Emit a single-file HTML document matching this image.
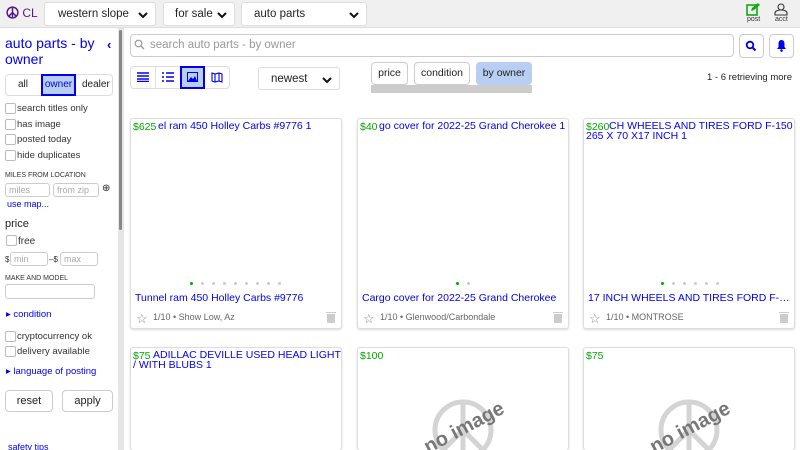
<!DOCTYPE html>
<html><head><meta charset="utf-8"><style>
*{box-sizing:border-box;margin:0;padding:0}
html,body{width:800px;height:450px;overflow:hidden}
body{font-family:"Liberation Sans",sans-serif;background:#fff;position:relative;color:#222;font-size:11px}
.a{position:absolute}
.top{left:0;top:0;width:800px;height:28px;background:#f0f0f0;border-bottom:1px solid #ddd}
.sel{position:absolute;top:2px;height:24px;background:#fff;border:1px solid #ddd;border-radius:3px;font-size:11.5px;line-height:22px;padding-left:13px;color:#222;white-space:nowrap}
.chev{position:absolute;right:6px;top:6px;width:12px;height:12px}
.side{left:0;top:28px;width:118px;height:422px;background:#fff}
.sb{left:118px;top:28px;width:6px;height:422px;background:#e6e6e6}
.sbt{left:119px;top:30px;width:3px;height:200px;background:#888;border-radius:2px}
.blue{color:#00e}
.cb{position:absolute;width:11px;height:11px;border:1px solid #bbb;border-radius:2px;background:#fff}
.lbl{position:absolute;font-size:9.5px;color:#333;white-space:nowrap}
.inp{position:absolute;height:14px;border:1px solid #ccc;border-radius:3px;font-size:9px;color:#aaa;padding-left:3px;line-height:12px}
.btn{position:absolute;border:1px solid #ccc;border-radius:4px;background:#fff;text-align:center;font-size:11px}
.card{position:absolute;width:212px;background:#fff;border:1px solid #ddd;border-radius:3px;box-shadow:0 1px 2px rgba(0,0,0,.15);overflow:hidden}
.pr{position:absolute;left:2px;top:2px;color:#0a0;font-size:10.5px}
.tt{position:absolute;top:2px;color:#00e;font-size:10.5px;white-space:nowrap;line-height:10px}
.ttl{position:absolute;left:4px;top:173px;color:#00e;font-size:10.5px;white-space:nowrap;width:204px;overflow:hidden;text-overflow:ellipsis}
.meta{position:absolute;left:22px;top:193px;color:#666;font-size:9px}
.dots{position:absolute;top:163px;height:4px}
.dots i{display:inline-block;width:3px;height:3px;border-radius:50%;background:#ccc;margin-right:8px;vertical-align:top}
.dots i.g{background:#0a0}
.trash{position:absolute;left:196px;top:195px;width:8px;height:9px;background:#ccc;border-radius:0 0 1px 1px}
.trash:before{content:"";position:absolute;left:-1px;top:-2px;width:10px;height:1px;background:#ccc}
</style></head><body>
<div class="a top"></div>
<div class="a" style="left:6px;top:6px;font-size:12px;color:#551a8b">
<svg width="13" height="13" viewBox="0 0 14 14" style="vertical-align:-2px"><circle cx="7" cy="7" r="5.8" fill="none" stroke="#551a8b" stroke-width="1.6"/><path d="M7 1.2V12.8M7 7L2.9 11.1M7 7L11.1 11.1" stroke="#551a8b" stroke-width="1.6"/></svg> CL</div>
<div class="sel" style="left:44px;width:112px">western slope<svg class="chev" viewBox="0 0 12 12"><path d="M2 4l4 4 4-4" fill="none" stroke="#111" stroke-width="2"/></svg></div>
<div class="sel" style="left:163px;width:72px;padding-left:11px">for sale<svg class="chev" viewBox="0 0 12 12"><path d="M2 4l4 4 4-4" fill="none" stroke="#111" stroke-width="2"/></svg></div>
<div class="sel" style="left:241px;width:126px;padding-left:12px">auto parts<svg class="chev" viewBox="0 0 12 12"><path d="M2 4l4 4 4-4" fill="none" stroke="#111" stroke-width="2"/></svg></div>
<svg class="a" style="left:746px;top:3px" width="14" height="13" viewBox="0 0 14 13"><rect x="1" y="2" width="10" height="10" fill="none" stroke="#1a1" stroke-width="1.6"/><path d="M5 8l1-3 6-5 2 2-6 5z" fill="#1a1"/></svg>
<div class="a" style="left:747px;top:16px;font-size:7px;color:#333">post</div>
<svg class="a" style="left:774px;top:3px" width="14" height="13" viewBox="0 0 14 13"><circle cx="7" cy="4" r="3" fill="none" stroke="#333" stroke-width="1.1"/><path d="M1 12v-2c0-2 3-3 6-3s6 1 6 3v2z" fill="none" stroke="#333" stroke-width="1.1"/></svg>
<div class="a" style="left:775px;top:16px;font-size:7px;color:#333">acct</div>

<div class="a side"></div>
<div class="a sb"></div><div class="a sbt"></div>
<div class="a blue" style="left:5px;top:35px;font-size:14px;line-height:16px;width:95px">auto parts - by owner</div>
<div class="a blue" style="left:107px;top:37px;font-size:13px;font-weight:bold">‹</div>
<div class="btn" style="left:5px;top:74px;width:108px;height:22px;border-color:#ddd"></div>
<div class="a" style="left:18px;top:79px;font-size:10px">all</div>
<div class="a" style="left:41px;top:74px;width:35px;height:22px;background:#b8cef2;border:2px solid #00e;font-size:10px;color:#00e;text-align:center;line-height:18px">owner</div>
<div class="a" style="left:82px;top:79px;font-size:10px">dealer</div>
<div class="cb" style="left:5px;top:103px"></div><div class="lbl" style="left:17px;top:103px">search titles only</div>
<div class="cb" style="left:5px;top:119px"></div><div class="lbl" style="left:17px;top:119px">has image</div>
<div class="cb" style="left:5px;top:134px"></div><div class="lbl" style="left:17px;top:134px">posted today</div>
<div class="cb" style="left:5px;top:150px"></div><div class="lbl" style="left:17px;top:150px">hide duplicates</div>
<div class="lbl" style="left:5px;top:172px;font-size:7px">MILES FROM LOCATION</div>
<div class="inp" style="left:5px;top:183px;width:45px">miles</div>
<div class="inp" style="left:53px;top:183px;width:46px">from zip</div>
<div class="a" style="left:102px;top:183px;font-size:10px">⊕</div>
<div class="a blue" style="left:7px;top:199px;font-size:9px">use map...</div>
<div class="a" style="left:5px;top:218px;font-size:11px">price</div>
<div class="cb" style="left:6px;top:235px"></div><div class="lbl" style="left:18px;top:236px;font-size:10px">free</div>
<div class="lbl" style="left:5px;top:255px;font-size:8px">$</div><div class="inp" style="left:10px;top:252px;width:38px;height:14px">min</div>
<div class="lbl" style="left:49px;top:255px;font-size:8px">–$</div><div class="inp" style="left:60px;top:252px;width:38px;height:14px">max</div>
<div class="lbl" style="left:5px;top:275px;font-size:7px">MAKE AND MODEL</div>
<div class="inp" style="left:5px;top:284px;width:90px;height:15px"></div>
<div class="a blue" style="left:6px;top:309px;font-size:9.5px">▸ condition</div>
<div class="cb" style="left:5px;top:331px"></div><div class="lbl" style="left:17px;top:331px">cryptocurrency ok</div>
<div class="cb" style="left:5px;top:346px"></div><div class="lbl" style="left:17px;top:346px">delivery available</div>
<div class="a blue" style="left:6px;top:366px;font-size:9.5px">▸ language of posting</div>
<div class="btn" style="left:5px;top:390px;width:48px;height:22px;line-height:20px">reset</div>
<div class="btn" style="left:62px;top:390px;width:51px;height:22px;line-height:20px">apply</div>
<div class="a blue" style="left:8px;top:443px;font-size:9px;line-height:9px">safety tips</div>

<div class="a" style="left:130px;top:34px;width:604px;height:23px;border:1px solid #ccc;border-radius:4px"></div>
<svg class="a" style="left:134px;top:39px" width="11" height="11" viewBox="0 0 11 11"><circle cx="4.5" cy="4.5" r="3.3" fill="none" stroke="#999" stroke-width="1.2"/><path d="M7 7l3 3" stroke="#999" stroke-width="1.3"/></svg>
<div class="a" style="left:150px;top:39px;font-size:11.5px;color:#999">search auto parts - by owner</div>
<div class="btn" style="left:739px;top:34px;width:25px;height:24px"></div>
<svg class="a" style="left:745px;top:40px" width="12" height="12" viewBox="0 0 12 12"><circle cx="5" cy="5" r="3.3" fill="none" stroke="#00e" stroke-width="1.8"/><path d="M7.5 7.5l3 3" stroke="#00e" stroke-width="2"/></svg>
<div class="btn" style="left:769px;top:34px;width:25px;height:24px"></div>
<svg class="a" style="left:776px;top:39px" width="11" height="13" viewBox="0 0 11 13"><path d="M5.5 1c2.3 0 3 2 3 4v3l1.5 2H1l1.5-2V5c0-2 .7-4 3-4z" fill="#00e"/><circle cx="5.5" cy="11.5" r="1.3" fill="#00e"/></svg>

<div class="btn" style="left:130px;top:66px;width:100px;height:23px;border-color:#ddd"></div>
<div class="a" style="left:155px;top:67px;width:1px;height:21px;background:#ddd"></div>
<svg class="a" style="left:137px;top:72px" width="12" height="10"><path d="M0 1h12M0 4h12M0 7h12M0 9.5h12" stroke="#00e" stroke-width="1.4"/></svg>
<svg class="a" style="left:162px;top:72px" width="12" height="10"><path d="M0 1h2M4 1h8M0 5h2M4 5h8M0 9h2M4 9h8" stroke="#00e" stroke-width="1.6"/></svg>
<div class="a" style="left:180px;top:66px;width:25px;height:23px;background:#b8cef2;border:2px solid #00e"></div>
<svg class="a" style="left:187px;top:72px" width="11" height="10"><rect x=".5" y=".5" width="10" height="9" fill="none" stroke="#00e"/><path d="M1 9l3-4 2 2 2-3 2 5z" fill="#00e"/></svg>
<svg class="a" style="left:211px;top:72px" width="12" height="11"><path d="M1 1l3 1 4-1 3 1v8l-3-1-4 1-3-1z M4 2v8 M8 1v8" fill="none" stroke="#00e" stroke-width="1.1"/></svg>

<div class="sel" style="left:258px;top:67px;width:82px;height:23px;padding-left:12px">newest<svg class="chev" viewBox="0 0 12 12"><path d="M2 4l4 4 4-4" fill="none" stroke="#111" stroke-width="2"/></svg></div>
<div class="a" style="left:371px;top:85px;width:161px;height:8px;background:#ccc"></div>
<div class="btn" style="left:371px;top:62px;width:37px;height:23px;line-height:21px;font-size:10.5px">price</div>
<div class="btn" style="left:414px;top:62px;width:56px;height:23px;line-height:21px;font-size:10.5px">condition</div>
<div class="a" style="left:476px;top:62px;width:56px;height:23px;background:#b8cef2;border-radius:4px;text-align:center;line-height:23px;font-size:10.5px">by owner</div>
<div class="a" style="left:707px;top:72px;font-size:9.5px;color:#222">1 - 6 retrieving more</div>

<div class="card" style="left:130px;top:118px;height:211px">
<div class="pr">$625</div><div class="tt" style="left:27px">el ram 450 Holley Carbs #9776 1</div>
<div class="dots" style="left:59px"><i class="g"></i><i></i><i></i><i></i><i></i><i></i><i></i><i></i><i></i></div>
<div class="ttl">Tunnel ram 450 Holley Carbs #9776</div>
<div class="a" style="left:5px;top:192px;color:#888;font-size:13px">☆</div>
<div class="meta">1/10 • Show Low, Az</div>
<div class="trash"></div>
</div>
<div class="card" style="left:357px;top:118px;height:211px">
<div class="pr">$40</div><div class="tt" style="left:21px">go cover for 2022-25 Grand Cherokee 1</div>
<div class="dots" style="left:98px"><i class="g"></i><i></i></div>
<div class="ttl">Cargo cover for 2022-25 Grand Cherokee</div>
<div class="a" style="left:5px;top:192px;color:#888;font-size:13px">☆</div>
<div class="meta">1/10 • Glenwood/Carbondale</div>
<div class="trash"></div>
</div>
<div class="card" style="left:583px;top:118px;height:211px">
<div class="pr">$260</div><div class="tt" style="left:25px">CH WHEELS AND TIRES FORD F-150</div><div class="tt" style="left:2px;top:12px">265 X 70 X17 INCH 1</div>
<div class="dots" style="left:77px"><i class="g"></i><i></i><i></i><i></i><i></i><i></i></div>
<div class="ttl">17 INCH WHEELS AND TIRES FORD F-150 265</div>
<div class="a" style="left:5px;top:192px;color:#888;font-size:13px">☆</div>
<div class="meta">1/10 • MONTROSE</div>
<div class="trash"></div>
</div>

<div class="card" style="left:130px;top:347px;height:103px;border-bottom:none">
<div class="pr">$75</div><div class="tt" style="left:22px">ADILLAC DEVILLE USED HEAD LIGHTS</div><div class="tt" style="left:2px;top:12px">/ WITH BLUBS 1</div>
</div>
<div class="card" style="left:357px;top:347px;height:103px;border-bottom:none"><div class="pr">$100</div>
<svg class="a" style="left:65px;top:45px" width="110" height="60"><circle cx="40" cy="37" r="28" fill="none" stroke="#d4d4d4" stroke-width="5"/><path d="M40 9v56M40 37L20 57M40 37l20 20" stroke="#d4d4d4" stroke-width="5"/><text x="44" y="40" transform="rotate(-28 44 40)" text-anchor="middle" font-family="Liberation Sans" font-size="20" font-weight="bold" fill="#777">no image</text></svg>
</div>
<div class="card" style="left:583px;top:347px;height:103px;border-bottom:none"><div class="pr">$75</div>
<svg class="a" style="left:65px;top:45px" width="110" height="60"><circle cx="40" cy="37" r="28" fill="none" stroke="#d4d4d4" stroke-width="5"/><path d="M40 9v56M40 37L20 57M40 37l20 20" stroke="#d4d4d4" stroke-width="5"/><text x="44" y="40" transform="rotate(-28 44 40)" text-anchor="middle" font-family="Liberation Sans" font-size="20" font-weight="bold" fill="#777">no image</text></svg>
</div>
</body></html>
